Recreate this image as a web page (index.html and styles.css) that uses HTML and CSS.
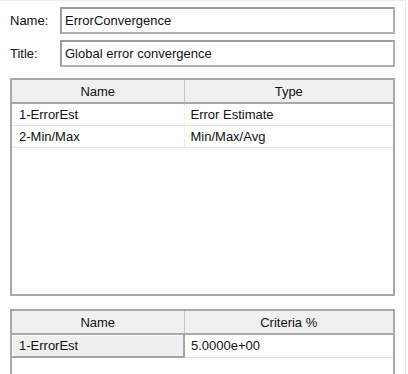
FILE: index.html
```html
<!DOCTYPE html>
<html lang="en">
<head>
  <meta charset="UTF-8">
  <meta name="viewport" content="width=device-width, initial-scale=1.0">
  <title>Error Convergence</title>
  <link rel="stylesheet" href="styles.css">
</head>
<body>

  <div class="panel">
    <!-- Nombre y titulo -->
    <div class="field">
      <label class="field-label">Name:</label>
      <div class="field-input">ErrorConvergence</div>
    </div>
    <div class="field">
      <label class="field-label">Title:</label>
      <div class="field-input">Global error convergence</div>
    </div>

    <!-- Lista de criterios -->
    <div class="grid grid-main">
      <table>
        <colgroup><col class="col-name"><col></colgroup>
        <thead>
          <tr><th>Name</th><th>Type</th></tr>
        </thead>
        <tbody>
          <tr><td>1-ErrorEst</td><td>Error Estimate</td></tr>
          <tr><td>2-Min/Max</td><td>Min/Max/Avg</td></tr>
        </tbody>
      </table>
    </div>

    <!-- Valores de criterio -->
    <div class="grid grid-criteria">
      <table>
        <colgroup><col class="col-name"><col></colgroup>
        <thead>
          <tr><th>Name</th><th>Criteria %</th></tr>
        </thead>
        <tbody>
          <tr><td class="row-head">1-ErrorEst</td><td>5.0000e+00</td></tr>
        </tbody>
      </table>
    </div>
  </div>

</body>
</html>
```

FILE: styles.css
```css
/* Estilos generales */
body {
  margin: 0;
  padding: 0;
  background-color: #ffffff;
  font-family: "Liberation Sans", Arial, sans-serif;
  font-size: 13px;
  color: #111;
}

.panel {
  width: 406px;
  height: 374px;
  box-sizing: border-box;
  border-top: 1px solid #efefef;
  border-right: 1px solid #ebebeb;
  padding: 6px 10px 0 10px;
  overflow: hidden;
}

/* Campos */
.field {
  display: flex;
  align-items: center;
  height: 27px;
  margin-bottom: 6px;
}

.field-label {
  width: 50px;
}

.field-input {
  flex: 1;
  height: 27px;
  box-sizing: border-box;
  border: 2px solid #a8a8a8;
  border-color: #9c9c9c #b0b0b0 #b0b0b0 #9c9c9c;
  padding: 0 3px;
  line-height: 23px;
  white-space: nowrap;
}

/* Tablas */
.grid {
  border: 2px solid #a9a9a9;
  background-color: #ffffff;
}

.grid-main {
  margin-top: 11px;
  height: 214px;
}

.grid-criteria {
  margin-top: 13px;
  height: 90px;
}

table {
  width: 100%;
  border-collapse: collapse;
  table-layout: fixed;
}

.col-name {
  width: 172px;
}

th {
  height: 22px;
  padding: 0;
  background-color: #f0f0f0;
  font-weight: normal;
  text-align: center;
  border-bottom: 2px solid #a8a8a8;
  border-right: 1px solid #c6c6c6;
}

th:last-child {
  border-right: none;
}

td {
  height: 21px;
  padding: 0 0 0 6px;
  border-bottom: 1px solid #e4e4e4;
  border-right: 1px solid #f0f0f0;
  white-space: nowrap;
}

td:first-child {
  padding-left: 7px;
}

td:last-child {
  border-right: none;
}

td.row-head {
  background-color: #efefef;
  border-right: 2px solid #a4a4a4;
  border-bottom: 2px solid #a4a4a4;
  box-shadow: inset 1px 1px #ffffff;
}
```
